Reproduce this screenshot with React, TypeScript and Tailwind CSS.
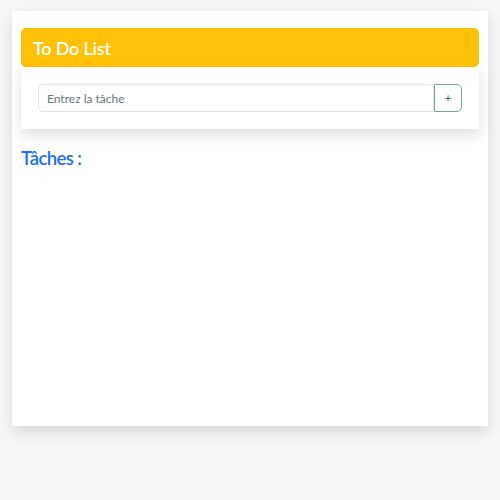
export default function App() {
  return (
    <div className="min-h-screen bg-[#f6f7f9] pt-[11px] px-[12px] font-['Lato',sans-serif]">
      <div className="h-[415px] bg-white pt-[17px] px-[9px] shadow-[0_6px_14px_rgba(0,0,0,0.13)]">
        <div className="h-[39px] rounded-[5px] bg-[#ffc107] pl-[12px] flex items-center">
          <h1 className="text-[18px] font-semibold tracking-[-0.2px] text-white leading-none">To Do List</h1>
        </div>
        <div className="h-[62px] bg-white px-[17px] pt-[17px] shadow-[0_6px_12px_rgba(0,0,0,0.13)]">
          <div className="flex h-[28px]">
            <input
              type="text"
              placeholder="Entrez la tâche"
              className="flex-1 min-w-0 h-full rounded-l-[5px] border border-[#dee2e6] px-[8px] text-[12px] text-[#212529] placeholder:text-[#6c757d] outline-none"
            />
            <button className="w-[28px] h-full rounded-r-[5px] border border-[#6fa896] text-[#3d6b5c] text-[12px] leading-none flex items-center justify-center">
              +
            </button>
          </div>
        </div>
        <h2 className="mt-[17px] text-[18.5px] font-semibold tracking-[-0.6px] text-[#1a6ef5] leading-[24px]">Tâches :</h2>
      </div>
    </div>
  );
}
